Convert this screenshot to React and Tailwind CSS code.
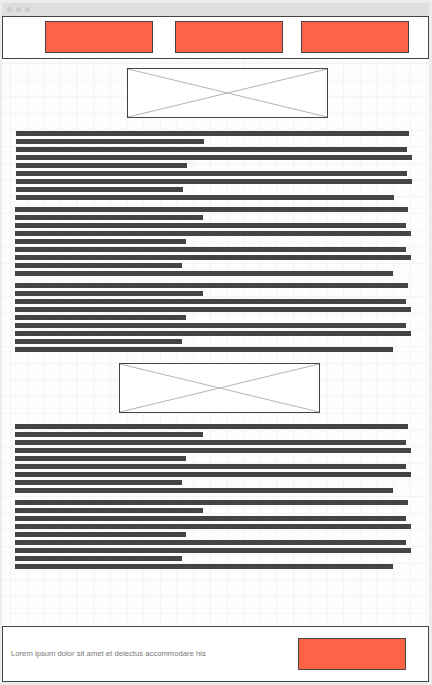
const lines = [393, 188, 391, 396, 171, 391, 396, 167, 378];

function TextBlock({ className = "" }) {
  return (
    <div className={`flex flex-col gap-[3px] ${className}`}>
      {lines.map((w, i) => (
        <div key={i} className="h-[5px] bg-[#444]" style={{ width: w }} />
      ))}
    </div>
  );
}

function Placeholder({ className = "" }) {
  return (
    <div className={`w-[201px] h-[50px] border border-[#444] bg-white ${className}`}>
      <svg className="block w-full h-full" viewBox="0 0 199 48" preserveAspectRatio="none">
        <line x1="0" y1="0" x2="199" y2="48" stroke="#b3b3b3" strokeWidth="1" />
        <line x1="199" y1="0" x2="0" y2="48" stroke="#b3b3b3" strokeWidth="1" />
      </svg>
    </div>
  );
}

function Button({ className = "" }) {
  return <div className={`w-[108px] h-[32px] bg-[#ff6347] border border-[#444] ${className}`} />;
}

export default function App() {
  return (
    <div className="w-[432px] h-[685px] bg-[#ececec] pl-[2px] pr-[3px] pt-[3px] pb-[3px] flex flex-col overflow-hidden font-['Liberation_Sans',Arial,sans-serif]">
      {/* browser chrome */}
      <div className="h-[13px] bg-[#dedede] flex items-center gap-[4px] pl-[5px] shrink-0">
        <span className="w-[5px] h-[5px] rounded-full bg-[#cbcbcb]" />
        <span className="w-[5px] h-[5px] rounded-full bg-[#cbcbcb]" />
        <span className="w-[5px] h-[5px] rounded-full bg-[#cbcbcb]" />
      </div>

      {/* header nav */}
      <div className="h-[43px] border border-[#444] bg-white flex items-start pt-[4px] pl-[42px] shrink-0">
        <Button />
        <Button className="ml-[22px]" />
        <Button className="ml-[18px]" />
      </div>

      {/* page body */}
      <div className="flex-1 bg-[#fdfdfd] bg-[linear-gradient(to_right,#f3f3f3_1px,transparent_1px),linear-gradient(to_bottom,#f3f3f3_1px,transparent_1px)] bg-[size:16.67px_16.67px] bg-[position:8px_4px] flex flex-col items-start">
        <Placeholder className="mt-[9px] ml-[125px]" />
        <TextBlock className="mt-[13px] ml-[14px]" />
        <TextBlock className="mt-[7px] ml-[13px]" />
        <TextBlock className="mt-[7px] ml-[13px]" />
        <Placeholder className="mt-[11px] ml-[117px]" />
        <TextBlock className="mt-[11px] ml-[13px]" />
        <TextBlock className="mt-[7px] ml-[13px]" />
      </div>

      {/* footer */}
      <div className="h-[56px] border border-[#444] bg-white flex items-center justify-between pl-[8px] pr-[22px] shrink-0">
        <span className="text-[7.7px] text-[#777] leading-none">Lorem ipsum dolor sit amet et delectus accommodare his</span>
        <Button />
      </div>
    </div>
  );
}
